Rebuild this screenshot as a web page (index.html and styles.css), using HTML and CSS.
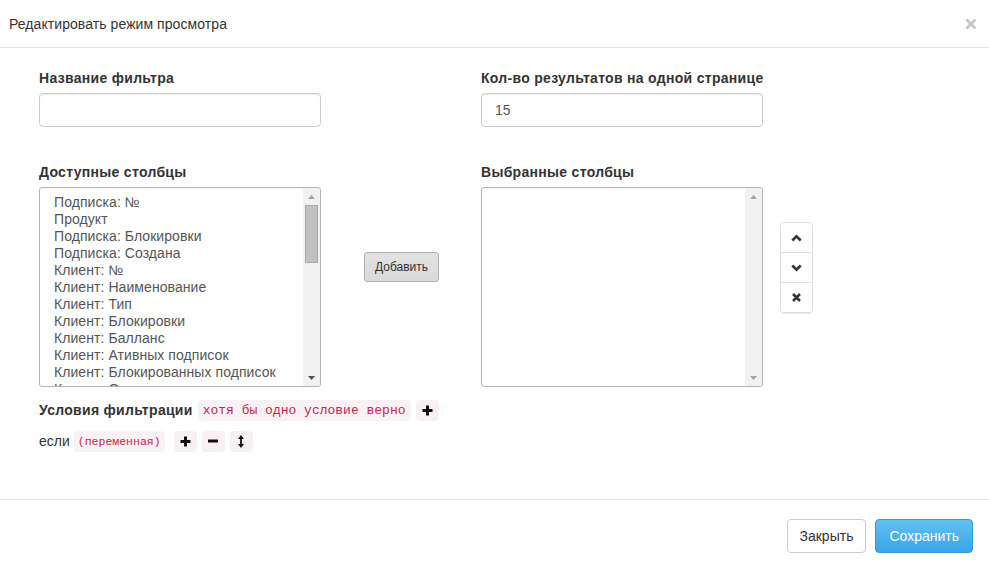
FILE: index.html
```html
<!DOCTYPE html>
<html lang="ru">
<head>
<meta charset="utf-8">
<title>Редактировать режим просмотра</title>
<link rel="stylesheet" href="styles.css">
</head>
<body>
<div class="modal">
  <div class="modal-header">
    <h3 class="modal-title">Редактировать режим просмотра</h3>
    <button class="close" type="button" aria-label="Закрыть">
      <svg width="12" height="12" viewBox="0 0 12 12"><path d="M1.5 1.5 L10.5 10.5 M10.5 1.5 L1.5 10.5" stroke="#c6c6c6" stroke-width="2.8" fill="none"/></svg>
    </button>
  </div>
  <div class="modal-body">
    <div class="row-top">
      <div class="field">
        <label class="lbl">Название фильтра</label>
        <div class="input"></div>
      </div>
      <div></div>
      <div class="field">
        <label class="lbl">Кол-во результатов на одной странице</label>
        <div class="input">15</div>
      </div>
    </div>
    <div class="row-cols">
      <div class="field">
        <label class="lbl">Доступные столбцы</label>
        <div class="listbox">
          <div class="options">
            <div>Подписка: №</div>
            <div>Продукт</div>
            <div>Подписка: Блокировки</div>
            <div>Подписка: Создана</div>
            <div>Клиент: №</div>
            <div>Клиент: Наименование</div>
            <div>Клиент: Тип</div>
            <div>Клиент: Блокировки</div>
            <div>Клиент: Балланс</div>
            <div>Клиент: Ативных подписок</div>
            <div>Клиент: Блокированных подписок</div>
            <div>Клиент: Отключенных подписок</div>
          </div>
          <div class="scrollbar">
            <div class="arrow"><svg width="7" height="4" viewBox="0 0 7 4"><path d="M0 4 L3.5 0 L7 4 Z" fill="#a3a3a3"/></svg></div>
            <div class="track"><div class="thumb"></div></div>
            <div class="arrow"><svg width="7" height="4" viewBox="0 0 7 4"><path d="M0 0 L3.5 4 L7 0 Z" fill="#505050"/></svg></div>
          </div>
        </div>
      </div>
      <div class="mid">
        <button class="btn-add" type="button">Добавить</button>
      </div>
      <div class="field">
        <label class="lbl">Выбранные столбцы</label>
        <div class="listbox">
          <div class="options"></div>
          <div class="scrollbar">
            <div class="arrow"><svg width="7" height="4" viewBox="0 0 7 4"><path d="M0 4 L3.5 0 L7 4 Z" fill="#a3a3a3"/></svg></div>
            <div class="track"></div>
            <div class="arrow"><svg width="7" height="4" viewBox="0 0 7 4"><path d="M0 0 L3.5 4 L7 0 Z" fill="#a3a3a3"/></svg></div>
          </div>
        </div>
      </div>
      <div class="btn-group">
        <button class="gbtn" type="button"><svg width="11" height="8" viewBox="0 0 11 8"><path d="M1.3 6.5 L5.5 2.3 L9.7 6.5" stroke="#333" stroke-width="2.6" fill="none"/></svg></button>
        <button class="gbtn" type="button"><svg width="11" height="8" viewBox="0 0 11 8"><path d="M1.3 1.5 L5.5 5.7 L9.7 1.5" stroke="#333" stroke-width="2.6" fill="none"/></svg></button>
        <button class="gbtn" type="button"><svg width="9" height="9" viewBox="0 0 9 9"><path d="M1 1 L8 8 M8 1 L1 8" stroke="#333" stroke-width="2.5" fill="none"/></svg></button>
      </div>
    </div>
    <div class="conditions">
      <div class="cond-row clip">
        <span class="cond-title">Условия фильтрации</span>
        <code class="pill">хотя бы одно условие верно</code>
        <span class="sbtn"><svg width="11" height="11" viewBox="0 0 11 11"><path d="M5.5 0.5 V10.5 M0.5 5.5 H10.5" stroke="#111" stroke-width="3" fill="none"/></svg></span>
        <span class="cut">:</span>
      </div>
      <div class="cond-row">
        <span class="if">если</span>
        <code class="pill pill-sm">(переменная)</code>
        <span class="sbtns">
          <span class="sbtn"><svg width="11" height="11" viewBox="0 0 11 11"><path d="M5.5 0.5 V10.5 M0.5 5.5 H10.5" stroke="#111" stroke-width="3" fill="none"/></svg></span>
          <span class="sbtn"><svg width="10" height="4" viewBox="0 0 10 4"><path d="M0 2 H10" stroke="#111" stroke-width="3" fill="none"/></svg></span>
          <span class="sbtn"><svg width="6" height="13" viewBox="0 0 6 13"><path d="M3 2 V11" stroke="#111" stroke-width="1.8" fill="none"/><path d="M0 4 L3 0 L6 4 Z M0 9 L3 13 L6 9 Z" fill="#111"/></svg></span>
        </span>
      </div>
    </div>
  </div>
  <div class="modal-footer">
    <button class="btn" type="button">Закрыть</button>
    <button class="btn btn-primary" type="button">Сохранить</button>
  </div>
</div>
</body>
</html>
```
FILE: styles.css
```css
* { box-sizing: border-box; }
html, body { margin: 0; padding: 0; background: #fff; }
body {
  font-family: "Liberation Sans", Arial, Helvetica, sans-serif;
  font-size: 14px;
  line-height: 20px;
  color: #333;
}
button { font-family: inherit; cursor: pointer; }

.modal { width: 989px; height: 569px; display: flex; flex-direction: column; }

.modal-header {
  display: flex;
  justify-content: space-between;
  align-items: center;
  padding: 14px 12px 13px 9px;
  border-bottom: 1px solid #e5e5e5;
}
.modal-title { margin: 0; font-size: 14px; font-weight: normal; line-height: 20px; color: #333; letter-spacing: 0.07px; }
.close { border: 0; background: none; padding: 0; width: 12px; height: 12px; display: flex; margin-top: -1px; }

.modal-body { padding: 20px 0 47px 39px; }

.row-top { display: grid; grid-template-columns: 282px 160px 282px; }
.row-cols { display: grid; grid-template-columns: 282px 160px 282px auto; margin-top: 35px; }

.field { display: flex; flex-direction: column; }
.lbl { font-weight: bold; line-height: 20px; margin-bottom: 5px; color: #333; letter-spacing: 0.3px; white-space: nowrap; }

.input {
  height: 34px;
  border: 1px solid #ccc;
  border-radius: 4px;
  box-shadow: inset 0 1px 1px rgba(0,0,0,0.075);
  padding: 6px 13px;
  color: #555;
  line-height: 20px;
}

.listbox {
  height: 200px;
  border: 1px solid #b5b5b5;
  border-radius: 3px;
  display: flex;
  overflow: hidden;
  box-shadow: inset 0 1px 1px rgba(0,0,0,0.05);
}
.options {
  flex: 1;
  overflow: hidden;
  padding: 6px 0 0 14px;
  line-height: 17px;
  color: #555;
  white-space: nowrap;
  letter-spacing: 0.07px;
}
.scrollbar { width: 17px; background: #f1f1f1; display: flex; flex-direction: column; }
.arrow { height: 17px; display: flex; align-items: center; justify-content: center; }
.track { flex: 1; }
.thumb {
  margin: 0 2px;
  height: 58px;
  background: #c1c1c1;
  border: 1px solid #a9a9a9;
}

.mid { padding: 90px 0 0 43px; }
.btn-add {
  width: 75px;
  height: 30px;
  font-size: 12px;
  color: #333;
  border: 1px solid #b0b0b0;
  border-radius: 3px;
  background: linear-gradient(#e2e2e2, #d9d9d9);
  padding: 0;
}

.btn-group {
  margin: 60px 0 0 17px;
  width: 33px;
  align-self: start;
  display: flex;
  flex-direction: column;
  border: 1px solid #ddd;
  border-radius: 4px;
  box-shadow: 0 1px 1px rgba(0,0,0,0.08);
  overflow: hidden;
}
.gbtn {
  height: 30px;
  border: 0;
  border-top: 1px solid #ddd;
  background: #fff;
  padding: 0;
  display: flex;
  align-items: center;
  justify-content: center;
}
.gbtn:first-child { border-top: 0; height: 29px; }

.conditions { margin-top: 12px; display: flex; flex-direction: column; gap: 9px; }
.cond-row { display: flex; align-items: center; height: 22px; white-space: nowrap; }
.clip { width: 404px; overflow: hidden; }
.cond-title { font-weight: bold; margin-right: 5px; letter-spacing: 0.3px; }
.pill {
  font-family: "Liberation Mono", "DejaVu Sans Mono", monospace;
  font-size: 13px;
  line-height: 17px;
  color: #c7254e;
  background: #f9f2f4;
  border-radius: 4px;
  padding: 2px 5px;
}
.pill-sm { font-size: 11.5px; padding: 2px 4px; }
.sbtn {
  width: 23px;
  height: 21px;
  border-radius: 4px;
  background: #f7f1f3;
  display: inline-flex;
  align-items: center;
  justify-content: center;
  margin-left: 5px;
  flex-shrink: 0;
}
.cut { margin-left: 3px; color: #999; }
.if { margin-right: 4px; }
.sbtns { display: inline-flex; margin-left: 4px; }

.modal-footer {
  border-top: 1px solid #e5e5e5;
  padding: 19px 16px 16px;
  display: flex;
  justify-content: flex-end;
  gap: 9px;
}
.btn {
  height: 34px;
  padding: 0 12px;
  font-size: 14px;
  color: #333;
  background: #fff;
  border: 1px solid #ccc;
  border-radius: 4px;
}
.btn-primary {
  color: #fff;
  padding: 0 13px;
  background: linear-gradient(#63c0f1, #37a5e5);
  border-color: #2f9ad9;
}
```
